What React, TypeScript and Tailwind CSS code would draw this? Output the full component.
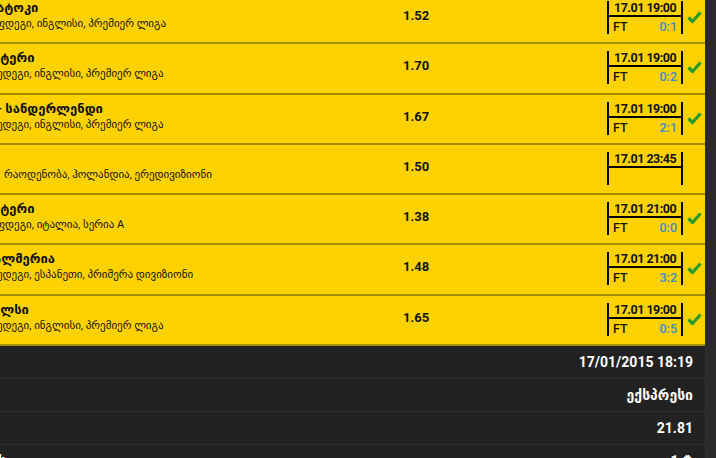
import React from 'react';

type Bet = {
  title: string;
  titleOffset: string;
  sub: string;
  subOffset: string;
  odds: string;
  time: string;
  score?: string;
};

const bets: Bet[] = [
  { title: 'ატოკი', titleOffset: 'ml-[-3px]', sub: 'ფდეგი, ინგლისი, პრემიერ ლიგა', subOffset: 'ml-[-4px]', odds: '1.52', time: '17.01 19:00', score: '0:1' },
  { title: 'ატერი', titleOffset: 'ml-[-7px]', sub: 'ედეგი, ინგლისი, პრემიერ ლიგა', subOffset: 'ml-[-3px]', odds: '1.70', time: '17.01 19:00', score: '0:2' },
  { title: '- სანდერლენდი', titleOffset: 'ml-[-3px]', sub: 'ედეგი, ინგლისი, პრემიერ ლიგა', subOffset: 'ml-[-3px]', odds: '1.67', time: '17.01 19:00', score: '2:1' },
  { title: '', titleOffset: '', sub: 'რაოდენობა, ჰოლანდია, ერედივიზიონი', subOffset: 'ml-[4px]', odds: '1.50', time: '17.01 23:45' },
  { title: 'ატერი', titleOffset: 'ml-[-7px]', sub: 'ფდეგი, იტალია, სერია A', subOffset: 'ml-[-4px]', odds: '1.38', time: '17.01 21:00', score: '0:0' },
  { title: 'ალმერია', titleOffset: 'ml-[-6px]', sub: 'ედეგი, ესპანეთი, პრიმერა დივიზიონი', subOffset: 'ml-[-3px]', odds: '1.48', time: '17.01 21:00', score: '3:2' },
  { title: 'ელსი', titleOffset: 'ml-[-7px]', sub: 'ედეგი, ინგლისი, პრემიერ ლიგა', subOffset: 'ml-[-3px]', odds: '1.65', time: '17.01 19:00', score: '0:5' },
];

function CheckMark() {
  return (
    <svg width="15" height="13" viewBox="0 0 15 13">
      <path d="M1.5 6.5 L5.5 10.5 L13.5 1.5" fill="none" stroke="#279b2a" strokeWidth="3.2" strokeLinejoin="round" />
    </svg>
  );
}

function BetRow({ bet }: { bet: Bet }) {
  return (
    <div className="h-[50.3px] shrink-0 flex border-b-2 border-[#a48c00] bg-[#fdd200] text-[#111]">
      <div className="w-[403px] pt-[5px] flex flex-col overflow-hidden whitespace-nowrap">
        <div className={`h-[18px] leading-[18px] text-[13px] font-bold ${bet.titleOffset}`}>{bet.title}</div>
        <div className={`h-[14px] leading-[14px] text-[11px] ${bet.subOffset}`}>{bet.sub}</div>
      </div>
      <div className="w-[204px] pt-[14px] text-[13px] leading-[16px] font-bold">{bet.odds}</div>
      <div className="w-[76px] mt-[7px] h-[33px] border-l-2 border-r-2 border-black flex flex-col">
        <div className="h-[16px] border-b-2 border-black text-[12.5px] leading-[14px] font-bold tracking-[-0.5px] pl-[5px]">
          {bet.time}
        </div>
        {bet.score && (
          <div className="flex justify-between items-center px-[4px] pt-[3px] text-[12.5px] leading-[14px] font-medium">
            <span>FT</span>
            <span className="text-[#3d8bc4]">{bet.score}</span>
          </div>
        )}
      </div>
      <div className="flex-1 flex items-start justify-center pt-[17px]">
        {bet.score && <CheckMark />}
      </div>
    </div>
  );
}

export default function App() {
  const info = ['17/01/2015 18:19', 'ექსპრესი', '21.81'];
  return (
    <div
      className="w-[716px] h-[458px] overflow-hidden bg-[#222222] flex"
      style={{ fontFamily: 'Roboto, "DejaVu Sans", sans-serif' }}
    >
      <div className="w-[705px] shrink-0 flex flex-col mt-[-6px]">
        {bets.map((b, i) => (
          <BetRow key={i} bet={b} />
        ))}
        {info.map((t) => (
          <div key={t} className="h-[33px] shrink-0 flex items-center justify-end pr-[12px] border-b border-[#2e2e2e] text-white text-[14px] font-bold">
            {t}
          </div>
        ))}
        <div className="h-[33px] shrink-0 flex items-start justify-between px-[12px] pt-[6px] text-white text-[14px] font-bold">
          <span className="ml-[-14px]">ს</span>
          <span>1 ₾</span>
        </div>
      </div>
      <div className="flex-1 bg-[#2a2a2a] border-l border-[#303030]" />
    </div>
  );
}
